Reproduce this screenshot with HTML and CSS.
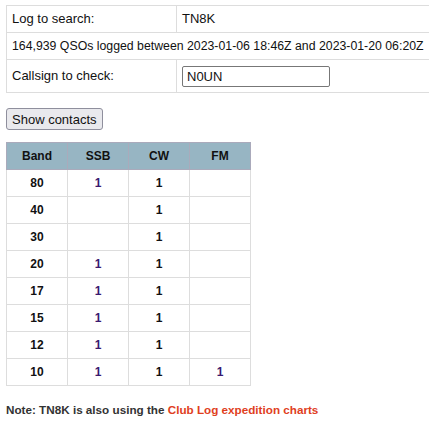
FILE: index.html
```html
<!DOCTYPE html>
<html>
<head>
<title>Log search</title>
<link rel="stylesheet" href="styles.css">
</head>
<body>
<table class="search">
  <tr>
    <td class="label">Log to search:</td>
    <td>TN8K</td>
  </tr>
  <tr>
    <td class="summary" colspan="2">164,939 QSOs logged between 2023-01-06 18:46Z and 2023-01-20 06:20Z</td>
  </tr>
  <tr class="callRow">
    <td class="label">Callsign to check:</td>
    <td><input class="callsign" type="text" value="N0UN"></td>
  </tr>
</table>

<button class="show">Show contacts</button>

<table class="bands">
  <tr>
    <th>Band</th>
    <th>SSB</th>
    <th>CW</th>
    <th>FM</th>
  </tr>
  <tr><td class="band">80</td><td class="ssb">1</td><td class="cw">1</td><td class="fm"></td></tr>
  <tr><td class="band">40</td><td class="ssb"></td><td class="cw">1</td><td class="fm"></td></tr>
  <tr><td class="band">30</td><td class="ssb"></td><td class="cw">1</td><td class="fm"></td></tr>
  <tr><td class="band">20</td><td class="ssb">1</td><td class="cw">1</td><td class="fm"></td></tr>
  <tr><td class="band">17</td><td class="ssb">1</td><td class="cw">1</td><td class="fm"></td></tr>
  <tr><td class="band">15</td><td class="ssb">1</td><td class="cw">1</td><td class="fm"></td></tr>
  <tr><td class="band">12</td><td class="ssb">1</td><td class="cw">1</td><td class="fm"></td></tr>
  <tr><td class="band">10</td><td class="ssb">1</td><td class="cw">1</td><td class="fm">1</td></tr>
</table>

<p class="note">Note: TN8K is also using the <a href="#">Club Log expedition charts</a></p>
</body>
</html>
```

FILE: styles.css
```css
body {
  margin: 5px 6px;
  font-family: "Liberation Sans", Arial, sans-serif;
  font-size: 13px;
  color: #111;
  background-color: #fff;
}

table {
  border-collapse: collapse;
}

.search {
  width: 424px;
}

.search td {
  border: 1px solid #ddd;
  padding: 6px 5px;
  line-height: 14px;
}

.search .label {
  width: 159px;
}

.search .summary {
  white-space: nowrap;
  font-size: 12.3px;
}

.search .callRow td {
  padding-top: 5px;
  padding-bottom: 5px;
  height: 22px;
}

.callsign {
  width: 148px;
  height: 21px;
  box-sizing: border-box;
  padding: 2px 4px;
  font-family: "Liberation Sans", Arial, sans-serif;
  font-size: 13px;
  color: #111;
  border: 1px solid #777;
  border-radius: 2px;
}

.show {
  display: block;
  margin-top: 15px;
  height: 22px;
  padding: 0 5px;
  font-family: "Liberation Sans", Arial, sans-serif;
  font-size: 13px;
  color: #111;
  background-color: #e9e9ed;
  border: 1px solid #8f8f9d;
  border-radius: 3px;
}

.bands {
  margin-top: 12px;
  font-size: 12px;
  font-weight: bold;
}

.bands th,
.bands td {
  width: 60px;
  height: 26px;
  padding: 0;
  text-align: center;
  border: 1px solid #ddd;
}

.bands th {
  background-color: #97b5c3;
  border-color: #aab;
  color: #111;
}

.bands .ssb,
.bands .fm {
  color: #3a1a70;
}

.note {
  margin-top: 17px;
  font-size: 11.7px;
  font-weight: bold;
  color: #333;
}

.note a {
  color: #e0401e;
  text-decoration: none;
}
```
